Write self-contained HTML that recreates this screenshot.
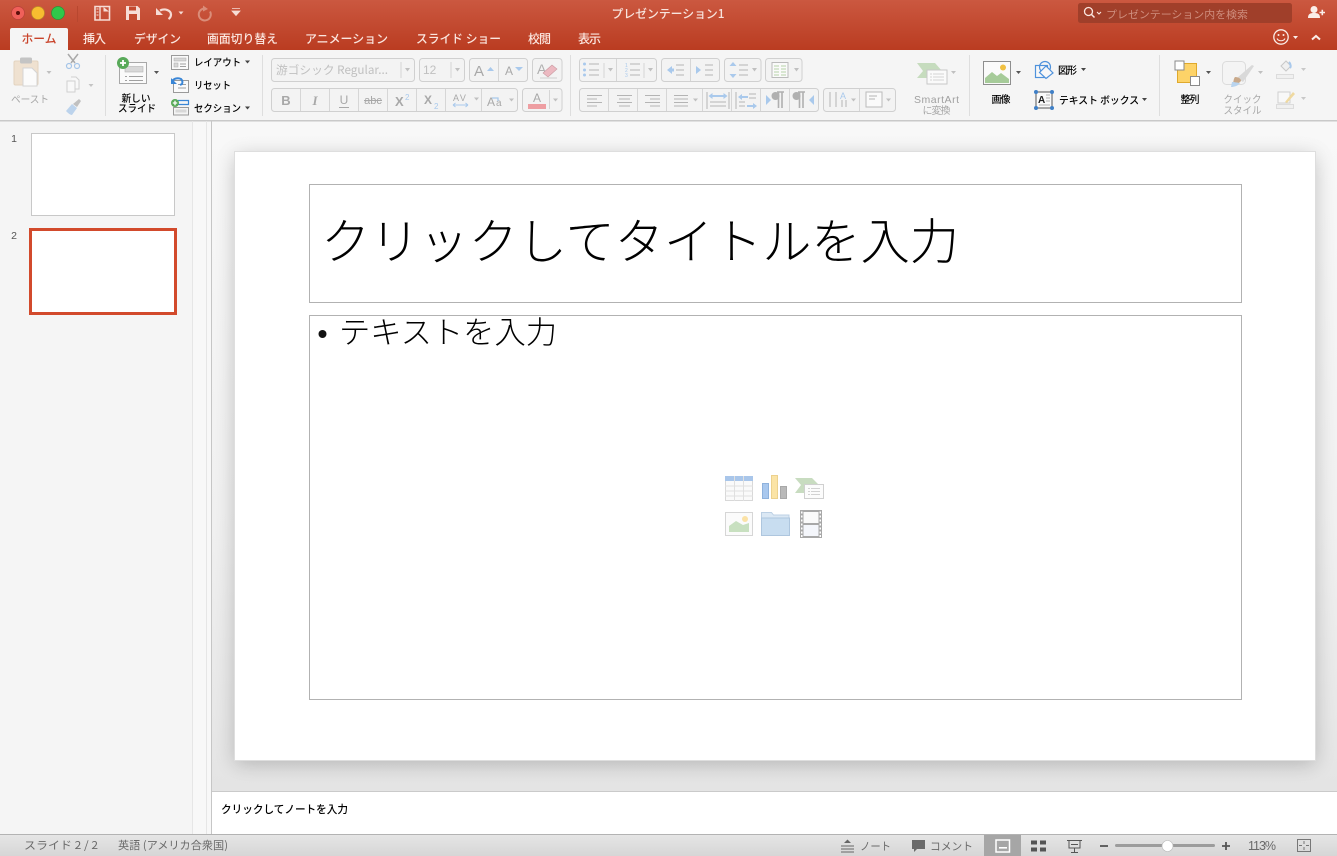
<!DOCTYPE html>
<html lang="ja"><head><meta charset="utf-8"><title>プレゼンテーション1</title>
<style>
html,body{margin:0;padding:0;width:1337px;height:856px;overflow:hidden;background:#fff}
svg{position:absolute;left:0;top:0;display:block}
text{font-family:"Liberation Sans","Noto Sans CJK JP",sans-serif}
.jp{font-family:"Noto Sans CJK JP",sans-serif}
.k{fill:#000;font-size:10px;font-weight:500}
.g{fill:#a8a8a8;font-size:10px}
.t{fill:#fbe6df;font-size:12px;font-weight:500}
.s{fill:#6a6a6a;font-size:11px}
.box{fill:#f3f3f3;stroke:#d0d0d0}
.dv{stroke:#d6d6d6}
.ln{stroke:#b4b4b4;stroke-width:1;fill:none}
.sep{stroke:#dedede}
</style></head><body>
<svg width="1337" height="856" viewBox="0 0 1337 856" xmlns="http://www.w3.org/2000/svg">
<defs>
<linearGradient id="hd" x1="0" y1="0" x2="0" y2="1"><stop offset="0" stop-color="#cb5840"/><stop offset="1" stop-color="#ba3c21"/></linearGradient>
<linearGradient id="cv" x1="0" y1="0" x2="0" y2="1"><stop offset="0" stop-color="#f8f8f8"/><stop offset=".6" stop-color="#f0f0f0"/><stop offset="1" stop-color="#e4e4e4"/></linearGradient>
<linearGradient id="st" x1="0" y1="0" x2="0" y2="1"><stop offset="0" stop-color="#e6e6e6"/><stop offset="1" stop-color="#d6d6d6"/></linearGradient>
<filter id="sh" x="-10%" y="-10%" width="120%" height="120%"><feGaussianBlur stdDeviation="10"/></filter>
</defs>

<!-- header -->
<rect width="1337" height="50" fill="url(#hd)"/>
<circle cx="18" cy="13" r="6.500" fill="#f0605a" stroke="#b8403a" stroke-width=".7"/><circle cx="18" cy="13" r="2" fill="#5c0f0c"/>
<circle cx="38" cy="13" r="6.500" fill="#f7bd30" stroke="#bd8a2a" stroke-width=".7"/>
<circle cx="58" cy="13" r="6.500" fill="#2fc84a" stroke="#2a9438" stroke-width=".7"/>
<line x1="77.500" y1="6" x2="77.500" y2="22" stroke="#b8472f"/>
<!-- qat -->
<path d="M95 6.500h14.500v13.500h-14.500z" fill="none" stroke="#f6dcd5" stroke-width="1.600"/>
<path d="M100 6.500v13.500" stroke="#f6dcd5" stroke-width="1.400"/>
<path d="M103.500 7v4.500h5.500z" fill="#f6dcd5"/>
<path d="M96.500 9h2M96.500 12h2M96.500 15h2" stroke="#f6dcd5"/>
<path d="M126 6h11.500l2.500 2.500v11.500h-14z" fill="#f6dcd5"/>
<rect x="129" y="6.500" width="7" height="4" fill="#c4492f"/><rect x="129" y="14" width="8" height="6" fill="#c4492f"/>
<path d="M156 8l7 7h-7z" fill="#f6dcd5"/>
<path d="M160 10.500c5-2.500 11 0 11 4 0 2-1 3.500-2.500 4.500" fill="none" stroke="#f6dcd5" stroke-width="2.200"/>
<path d="M178.500 11.500h5l-2.500 3z" fill="#f6dcd5"/>
<path d="M204 8.500a6 6 0 1 0 6 3" fill="none" stroke="#da8d79" stroke-width="2"/><path d="M203 5.500l5 3.500-5 2.500z" fill="#da8d79"/>
<path d="M232 8.500h8M232 11h8l-4 4.500z" fill="#f6dcd5" stroke="#f6dcd5" stroke-width=".8"/>
<text x="668" y="18" text-anchor="middle" class="jp" fill="#f8e4de" font-size="12" font-weight="500" textLength="113" lengthAdjust="spacingAndGlyphs">プレゼンテーション1</text>
<!-- search -->
<rect x="1078" y="3" width="214" height="20" rx="2.500" fill="#a03f2a"/>
<circle cx="1088.500" cy="11.500" r="4" fill="none" stroke="#fbe6df" stroke-width="1.300"/><path d="M1091.500 14.500l3 3" stroke="#fbe6df" stroke-width="1.500"/>
<path d="M1097 12l2 2 2-2" fill="none" stroke="#fbe6df" stroke-width="1.100"/>
<text x="1106" y="18" class="jp" fill="#cf8e7e" font-size="10.500" textLength="142" lengthAdjust="spacingAndGlyphs">プレゼンテーション内を検索</text>
<circle cx="1314" cy="9.500" r="3.500" fill="#fbeee9"/><path d="M1308 18c0-4 2-5 6-5s6 1 6 5z" fill="#fbeee9"/><path d="M1319.500 12.500h5.500M1322.300 9.700v5.600" stroke="#fbeee9" stroke-width="1.600"/>
<!-- tabs -->
<path d="M10 50V30q0-2 2-2h54q2 0 2 2v20z" fill="#f5f5f5"/>
<text x="39" y="43" text-anchor="middle" class="jp" fill="#c9432a" font-size="12" font-weight="500" textLength="35" lengthAdjust="spacingAndGlyphs">ホーム</text>
<g class="jp">
<text x="83" y="43" class="t jp" textLength="23">挿入</text>
<text x="134" y="43" class="t jp" textLength="47" lengthAdjust="spacingAndGlyphs">デザイン</text>
<text x="207" y="43" class="t jp" textLength="71" lengthAdjust="spacingAndGlyphs">画面切り替え</text>
<text x="305" y="43" class="t jp" textLength="83" lengthAdjust="spacingAndGlyphs">アニメーション</text>
<text x="416" y="43" class="t jp" textLength="85" lengthAdjust="spacingAndGlyphs">スライド ショー</text>
<text x="528" y="43" class="t jp" textLength="23">校閲</text>
<text x="578" y="43" class="t jp" textLength="23">表示</text>
</g>
<circle cx="1281" cy="37" r="7.200" fill="none" stroke="#fbeee9" stroke-width="1.300"/><circle cx="1278.500" cy="35" r="1" fill="#fbeee9"/><circle cx="1283.500" cy="35" r="1" fill="#fbeee9"/><path d="M1277 38.500c1.500 3 6.500 3 8 0" fill="none" stroke="#fbeee9" stroke-width="1.100"/>
<path d="M1293 36h5l-2.500 3z" fill="#fbeee9"/>
<path d="M1312 39.500l4-3.500 4 3.500" fill="none" stroke="#fbeee9" stroke-width="2"/>

<!-- ribbon -->
<rect y="50" width="1337" height="70" fill="#f5f5f5"/>
<rect y="120" width="1337" height="1.500" fill="#c9c9c9"/>
<g class="sep"><line x1="105.500" y1="55" x2="105.500" y2="116"/><line x1="262.500" y1="55" x2="262.500" y2="116"/><line x1="570.500" y1="55" x2="570.500" y2="116"/><line x1="969.500" y1="55" x2="969.500" y2="116"/><line x1="1159.500" y1="55" x2="1159.500" y2="116"/></g>

<!-- paste -->
<rect x="14" y="61" width="24" height="24" rx="1.500" fill="#efe1d0" stroke="#e3d3bf"/>
<rect x="20" y="57.500" width="12" height="6" rx="1.500" fill="#c4c4c4"/>
<path d="M23 68h9l5 5v13h-14z" fill="#fbfbfb" stroke="#d4d4d4"/>
<path d="M46.500 71h5l-2.500 3z" fill="#c0c0c0"/>
<text x="30" y="103" text-anchor="middle" class="g jp" textLength="38" lengthAdjust="spacingAndGlyphs">ペースト</text>
<path d="M68 54l7 9M78 54l-7 9" stroke="#a9a9a9" stroke-width="1.500"/><circle cx="69" cy="66" r="2.500" fill="none" stroke="#a6c5e8" stroke-width="1.200"/><circle cx="77" cy="66" r="2.500" fill="none" stroke="#a6c5e8" stroke-width="1.200"/>
<path d="M67 81h8v11h-8zM71 77h5l3 3v9h-4" fill="#f8f8f8" stroke="#d0d0d0"/>
<path d="M88.500 84h5l-2.500 3z" fill="#c4c4c4"/>
<path d="M66 111l6-7 5 4-5 7c-2 0-4-2-6-4z" fill="#bcd3ec"/><path d="M73 104l6-5 2 2-4 6z" fill="#c0c0c0"/>

<!-- new slide -->
<rect x="119.500" y="62.500" width="27" height="21" fill="#fafafa" stroke="#a8a8a8"/>
<rect x="125" y="66.500" width="18" height="5.500" fill="#d8d8d8" stroke="#b4b4b4" stroke-width=".6"/>
<path d="M125 76.500h2M129 76.500h14M125 80.500h2M129 80.500h14" stroke="#a0a0a0"/>
<circle cx="123" cy="63" r="6" fill="#58a959"/><path d="M120 63h6M123 60v6" stroke="#fff" stroke-width="1.800"/>
<path d="M154 71h5l-2.500 3z" fill="#555"/>
<text x="136" y="102" text-anchor="middle" class="k jp" textLength="29" lengthAdjust="spacingAndGlyphs">新しい</text>
<text x="137" y="112" text-anchor="middle" class="k jp" textLength="38" lengthAdjust="spacingAndGlyphs">スライド</text>
<!-- layout/reset/section -->
<rect x="171.500" y="55.500" width="17" height="14" fill="#fafafa" stroke="#9a9a9a"/><rect x="174" y="58" width="12" height="3" fill="#d8d8d8" stroke="#aaa" stroke-width=".5"/><rect x="174" y="63" width="4" height="4" fill="#d8d8d8" stroke="#aaa" stroke-width=".5"/><path d="M180 64h6M180 66.500h6" stroke="#a0a0a0"/>
<text x="194" y="66" class="k jp" textLength="47" lengthAdjust="spacingAndGlyphs">レイアウト</text><path d="M245 60.500h5l-2.500 3z" fill="#444"/>
<rect x="173.500" y="80.500" width="15" height="12" fill="#fafafa" stroke="#9a9a9a"/><path d="M178 84.500h8M178 88h8" stroke="#a0a0a0"/>
<path d="M172 82a6 5 0 0 1 9-3 6 5 0 0 1 1 5l-2 1" fill="none" stroke="#3a86d6" stroke-width="2"/><path d="M171 78v6h6z" fill="#3a86d6"/>
<text x="194" y="89" class="k jp" textLength="37" lengthAdjust="spacingAndGlyphs">リセット</text>
<path d="M178 100.500h10.500v4h-10" fill="none" stroke="#3a86d6" stroke-width="1.200"/><rect x="173.500" y="107.500" width="15" height="7.500" fill="#f4f4f4" stroke="#9a9a9a"/><rect x="175.500" y="109.500" width="11" height="3" fill="#d8d8d8"/>
<circle cx="175" cy="103" r="4" fill="#58a959"/><path d="M172.800 103h4.400M175 100.800v4.400" stroke="#fff" stroke-width="1.300"/>
<text x="194" y="112" class="k jp" textLength="47" lengthAdjust="spacingAndGlyphs">セクション</text><path d="M245 106.500h5l-2.500 3z" fill="#444"/>

<!-- font group -->
<rect x="271.500" y="58.500" width="143" height="23" rx="3" class="box"/><line x1="401" y1="62" x2="401" y2="78" class="dv"/>
<text x="276" y="74" class="jp" fill="#c0c0c0" font-size="11.500" textLength="112" lengthAdjust="spacingAndGlyphs">游ゴシック Regular...</text><path d="M405 68h5l-2.500 3.500z" fill="#c0c0c0"/>
<rect x="419.500" y="58.500" width="45" height="23" rx="3" class="box"/><line x1="451" y1="62" x2="451" y2="78" class="dv"/>
<text x="423" y="74" fill="#c0c0c0" font-size="12">12</text><path d="M455 68h5l-2.500 3.500z" fill="#c0c0c0"/>
<rect x="469.500" y="58.500" width="58" height="23" rx="3" class="box"/><line x1="498.500" y1="59" x2="498.500" y2="81" class="dv"/>
<text x="474" y="76" fill="#a8a8a8" font-size="15">A</text><path d="M487 71l3.500-4 3.500 4z" fill="#a9c9ec"/>
<text x="505" y="75" fill="#a8a8a8" font-size="12">A</text><path d="M515 67h8l-4 4z" fill="#a9c9ec"/>
<rect x="532.500" y="58.500" width="29.500" height="23" rx="3" class="box"/>
<text x="537" y="74" fill="#b0b0b0" font-size="14">A</text><path d="M543 73l9-8 5 4-9 8z" fill="#ecb9c1" stroke="#c99aa2" stroke-width=".6"/><path d="M540 78h17" stroke="#cfcfcf"/>
<rect x="271.500" y="88.500" width="246" height="23" rx="3" class="box"/>
<g class="dv"><line x1="300.500" y1="89" x2="300.500" y2="111"/><line x1="329.500" y1="89" x2="329.500" y2="111"/><line x1="358.500" y1="89" x2="358.500" y2="111"/><line x1="387.500" y1="89" x2="387.500" y2="111"/><line x1="416.500" y1="89" x2="416.500" y2="111"/><line x1="445.500" y1="89" x2="445.500" y2="111"/><line x1="481.500" y1="89" x2="481.500" y2="111"/></g>
<text x="286" y="105" text-anchor="middle" fill="#a8a8a8" font-size="13" font-weight="700">B</text>
<text x="315" y="105" text-anchor="middle" fill="#a8a8a8" font-size="13" font-style="italic" font-weight="700" style="font-family:'Liberation Serif',serif">I</text>
<text x="344" y="104" text-anchor="middle" fill="#a8a8a8" font-size="12">U</text><path d="M339 107.500h10" stroke="#a8a8a8"/>
<text x="373" y="104" text-anchor="middle" fill="#a8a8a8" font-size="11">abc</text><path d="M364 100.500h18" stroke="#a8a8a8"/>
<text x="395" y="106" fill="#a8a8a8" font-size="13" font-weight="700">X</text><text x="405" y="100" fill="#a9c9ec" font-size="8">2</text>
<text x="424" y="104" fill="#a8a8a8" font-size="12" font-weight="700">X</text><text x="434" y="109" fill="#a9c9ec" font-size="8">2</text>
<text x="453" y="101" fill="#a8a8a8" font-size="9" letter-spacing="1.500">AV</text><path d="M453 105h15M453 105l2.500-2M453 105l2.500 2M468 105l-2.500-2M468 105l-2.500 2" stroke="#a9c9ec" fill="none"/>
<path d="M474 97.500h5l-2.500 3z" fill="#c0c0c0"/>
<text x="487" y="106" fill="#a8a8a8" font-size="12">A</text><text x="496" y="106" fill="#a8a8a8" font-size="10">a</text><path d="M492 98h6v3" fill="none" stroke="#a9c9ec" stroke-width="1.300"/>
<path d="M509 98.500h5l-2.500 3z" fill="#c0c0c0"/>
<rect x="522.500" y="88.500" width="39.500" height="23" rx="3" class="box"/><line x1="549.500" y1="90" x2="549.500" y2="109" class="dv"/>
<text x="537" y="102" text-anchor="middle" fill="#a8a8a8" font-size="12">A</text><rect x="528" y="104" width="18" height="5" fill="#ee9ea2"/>
<path d="M553 98.500h5l-2.500 3z" fill="#c0c0c0"/>

<!-- paragraph -->
<rect x="579.500" y="58.500" width="77" height="23" rx="3" class="box"/><line x1="616.500" y1="59" x2="616.500" y2="81" class="dv"/><line x1="604" y1="63" x2="604" y2="78" class="dv"/><line x1="644" y1="63" x2="644" y2="78" class="dv"/>
<circle cx="584.500" cy="64" r="1.500" fill="#a9c9ec"/><circle cx="584.500" cy="70" r="1.500" fill="#a9c9ec"/><circle cx="584.500" cy="75" r="1.500" fill="#a9c9ec"/><path d="M589 64h10M589 70h10M589 75h10" class="ln"/>
<path d="M608 68h5l-2.500 3.500zM648 68h5l-2.500 3.500z" fill="#c0c0c0"/>
<text x="625" y="67" fill="#a9c9ec" font-size="5">1</text><text x="625" y="72" fill="#a9c9ec" font-size="5">2</text><text x="625" y="77" fill="#a9c9ec" font-size="5">3</text><path d="M630 64h10M630 70h10M630 75h10" class="ln"/>
<rect x="661.500" y="58.500" width="58" height="23" rx="3" class="box"/><line x1="690.500" y1="59" x2="690.500" y2="81" class="dv"/>
<path d="M667 70l5-4v8z" fill="#a9c9ec"/><rect x="671" y="68.500" width="3" height="3" fill="#a9c9ec"/><path d="M676 65h8M676 70h8M676 75h8" class="ln"/>
<path d="M701 70l-5-4v8z" fill="#a9c9ec"/><rect x="696" y="68.500" width="3" height="3" fill="#a9c9ec"/><path d="M705 65h8M705 70h8M705 75h8" class="ln"/>
<rect x="724.500" y="58.500" width="36.500" height="23" rx="3" class="box"/>
<path d="M733 62l3.500 4h-7zM733 78l3.500-4h-7z" fill="#a9c9ec"/><path d="M739 65h9M739 70h9M739 75h9" class="ln"/><path d="M752 68h5l-2.500 3.500z" fill="#c0c0c0"/>
<rect x="765.500" y="58.500" width="36.500" height="23" rx="3" class="box"/>
<rect x="772" y="62.500" width="16" height="15" fill="#fafafa" stroke="#bbb"/><path d="M774 66h5M781 66h5M774 69h5M781 69h5M774 72h5M781 72h5M774 75h5M781 75h5" stroke="#b5d3a8"/><path d="M794 68h5l-2.500 3.500z" fill="#c0c0c0"/>
<rect x="579.500" y="88.500" width="239" height="23" rx="3" class="box"/>
<g class="dv"><line x1="608.500" y1="89" x2="608.500" y2="111"/><line x1="637.500" y1="89" x2="637.500" y2="111"/><line x1="666.500" y1="89" x2="666.500" y2="111"/><line x1="702.500" y1="89" x2="702.500" y2="111"/><line x1="731.500" y1="89" x2="731.500" y2="111"/><line x1="760.500" y1="89" x2="760.500" y2="111"/><line x1="789.500" y1="89" x2="789.500" y2="111"/></g>
<g class="ln"><path d="M587 95.500h15M587 99h10M587 102.500h15M587 106h10"/><path d="M617 95.500h15M619 99h11M617 102.500h15M619 106h11"/><path d="M645 95.500h15M650 99h10M645 102.500h15M650 106h10"/><path d="M674 95.500h14M674 99h14M674 102.500h14M674 106h14"/></g>
<path d="M693 98.500h5l-2.500 3z" fill="#c0c0c0"/>
<path d="M707 92v17M729 92v17" class="ln"/><path d="M711 96h14" stroke="#a9c9ec" stroke-width="2"/><path d="M708.500 96l4-3v6zM727.500 96l-4-3v6z" fill="#a9c9ec"/><path d="M710 102h16M710 106h16" class="ln"/>
<path d="M736 92v17" class="ln"/><path d="M740 97h8" stroke="#a9c9ec" stroke-width="2"/><path d="M738 97l4-3v6z" fill="#a9c9ec"/><path d="M749 94h7M749 98h7M739 102h6M739 106h6" class="ln"/><path d="M747 106h6" stroke="#a9c9ec" stroke-width="2"/><path d="M757 106l-4-3v6z" fill="#a9c9ec"/>
<path d="M766 95l5 5-5 5z" fill="#a9c9ec"/><path d="M777 92h7M778.500 92v16M782 92v16" stroke="#b0b0b0" stroke-width="1.600" fill="none"/><circle cx="775.500" cy="96" r="4" fill="#b0b0b0"/>
<path d="M814 95l-5 5 5 5z" fill="#a9c9ec"/><path d="M798 92h7M799.500 92v16M803 92v16" stroke="#b0b0b0" stroke-width="1.600" fill="none"/><circle cx="796.500" cy="96" r="4" fill="#b0b0b0"/>
<rect x="823.500" y="88.500" width="72" height="23" rx="3" class="box"/><line x1="859.500" y1="89" x2="859.500" y2="111" class="dv"/>
<path d="M830 92v15M836 92v15M842 100v7M846 100v7" class="ln"/><text x="840" y="99" fill="#a9c9ec" font-size="9">A</text><path d="M851 98.500h5l-2.500 3z" fill="#c0c0c0"/>
<rect x="866" y="92" width="16" height="15" fill="#fafafa" stroke="#bbb"/><path d="M869 96h8M869 99h6" class="ln"/><path d="M886 98.500h5l-2.500 3z" fill="#c0c0c0"/>

<!-- smartart -->
<path d="M917 63h18l7 8-7 7h-18l6-7z" fill="#c6dcbe"/><rect x="927" y="70" width="20" height="14" fill="#fafafa" stroke="#c8c8c8"/><path d="M930 74h2M933 74h11M930 77h2M933 77h11M930 80h2M933 80h11" stroke="#c8c8c8" stroke-width=".8"/>
<path d="M951 71h5l-2.500 3z" fill="#c0c0c0"/>
<text x="936.500" y="103" text-anchor="middle" fill="#a0a0a0" font-size="10.500" textLength="45">SmartArt</text>
<text x="936.500" y="114" text-anchor="middle" class="g jp" textLength="28">に変換</text>

<!-- picture -->
<rect x="983.500" y="61.500" width="27" height="23" fill="#fafafa" stroke="#8e8e8e"/>
<path d="M985 83v-5l7-6 5 4 4-3 8 6v4z" fill="#a6cb99"/><circle cx="1003" cy="67.500" r="3" fill="#f0c042"/>
<path d="M1016 71h5l-2.500 3z" fill="#555"/>
<text x="1001" y="103" text-anchor="middle" class="k jp" textLength="19">画像</text>
<!-- shapes -->
<rect x="1035.500" y="65.500" width="12" height="12" fill="#f8f8f8" stroke="#4f92dc" stroke-width="1.200"/><circle cx="1045" cy="67" r="5.500" fill="none" stroke="#4f92dc" stroke-width="1.200"/><path d="M1046 66l7 7-7 5.500-6.500-6z" fill="#f8f8f8" stroke="#4f92dc" stroke-width="1.200"/>
<text x="1058" y="74" class="k jp" textLength="19">図形</text><path d="M1081 68h5l-2.500 3z" fill="#444"/>
<!-- textbox -->
<rect x="1036" y="92" width="16" height="16" fill="#fafafa" stroke="#555"/>
<text x="1038" y="103" fill="#222" font-size="10" font-weight="700">A</text><path d="M1046 95h4M1046 98h4M1046 101h4M1039 105h11" stroke="#999" stroke-width=".8"/>
<g fill="#3f7fc6"><circle cx="1036" cy="92" r="2"/><circle cx="1052" cy="92" r="2"/><circle cx="1036" cy="108" r="2"/><circle cx="1052" cy="108" r="2"/></g>
<text x="1059" y="104" class="k jp" textLength="80" lengthAdjust="spacingAndGlyphs">テキスト ボックス</text><path d="M1142 98h5l-2.500 3z" fill="#444"/>
<!-- arrange -->
<rect x="1177.500" y="63.500" width="19" height="19" fill="#fdd368" stroke="#dfa92c"/>
<rect x="1175" y="61" width="9" height="9" fill="#fff" stroke="#8a8a8a"/><rect x="1190.500" y="76.500" width="9" height="9" fill="#fff" stroke="#8a8a8a"/>
<path d="M1206 71h5l-2.500 3z" fill="#555"/>
<text x="1190" y="103" text-anchor="middle" class="k jp" textLength="19">整列</text>
<!-- quick style -->
<rect x="1222.500" y="61.500" width="23" height="23" rx="4" fill="#f4f4f4" stroke="#dcdcdc"/>
<path d="M1237 78l15-13 2 1-11 16z" fill="#d9d9d9"/><path d="M1235 77c4 0 6 2 6 4-3 3-7 6-10 6 3-3 2-8 4-10z" fill="#c9a98a"/><path d="M1232 82c3 0 7 1 8 1-2 3-6 4-9 4z" fill="#b9d4ee"/>
<path d="M1258 71h5l-2.500 3z" fill="#c0c0c0"/>
<text x="1242.500" y="103" text-anchor="middle" class="g jp" textLength="38" lengthAdjust="spacingAndGlyphs">クイック</text>
<text x="1242.500" y="114" text-anchor="middle" class="g jp" textLength="38" lengthAdjust="spacingAndGlyphs">スタイル</text>
<path d="M1281 66l5-5 5 5-5 5z" fill="#f0f0f0" stroke="#c8c8c8"/><path d="M1289 62c2 2 2 5 1 6" fill="none" stroke="#a9c9ec" stroke-width="2"/><rect x="1276.500" y="74.500" width="17" height="4" fill="#f0f0f0" stroke="#dcdcdc"/>
<path d="M1301 68h5l-2.500 3z" fill="#c8c8c8"/>
<rect x="1278" y="92" width="12" height="11" fill="#f8f8f8" stroke="#d0d0d0"/><path d="M1285 102l8-10 2 2-8 9z" fill="#efd9a0"/><rect x="1276.500" y="104.500" width="17" height="4" fill="#f0f0f0" stroke="#dcdcdc"/>
<path d="M1301 97h5l-2.500 3z" fill="#c8c8c8"/>

<!-- side panel -->
<rect y="121.500" width="193" height="713" fill="#f5f5f5"/>
<rect x="193" y="121.500" width="19" height="713" fill="#f8f8f8"/>
<line x1="192.500" y1="121" x2="192.500" y2="834" stroke="#e6e6e6"/>
<line x1="206.500" y1="121" x2="206.500" y2="834" stroke="#e6e6e6"/>
<line x1="211.500" y1="121" x2="211.500" y2="834" stroke="#c6c6c6"/>
<text x="14" y="142" text-anchor="middle" fill="#555" font-size="10.500">1</text>
<text x="14" y="239" text-anchor="middle" fill="#555" font-size="10.500">2</text>
<rect x="31.500" y="133.500" width="143" height="82" fill="#fff" stroke="#c8c8c8"/>
<rect x="30.500" y="229.500" width="145" height="84" fill="#fff" stroke="#d24a2c" stroke-width="3"/>

<!-- canvas -->
<rect x="212" y="121.500" width="1125" height="669.500" fill="url(#cv)"/>
<rect x="235" y="152" width="1080" height="608" fill="#000" opacity=".22" filter="url(#sh)" transform="translate(0 4)"/>
<rect x="212" y="791" width="1125" height="1.500" fill="#cacaca"/>
<rect x="212" y="792" width="1125" height="43" fill="#fff"/>
<rect x="234.500" y="151.500" width="1081" height="609" fill="#fff" stroke="#dedede"/>
<rect x="309.500" y="184.500" width="932" height="118" fill="none" stroke="#b2b2b2"/>
<rect x="309.500" y="315.500" width="932" height="384" fill="none" stroke="#b2b2b2"/>
<text x="321" y="259" class="jp" fill="#000" font-size="49" font-weight="300" textLength="638" lengthAdjust="spacingAndGlyphs">クリックしてタイトルを入力</text>
<circle cx="322.500" cy="334" r="4" fill="#111"/>
<text x="339" y="343.500" class="jp" fill="#000" font-size="31" font-weight="300" textLength="218" lengthAdjust="spacingAndGlyphs">テキストを入力</text>

<!-- content icons -->
<rect x="725.500" y="476.500" width="27" height="24" fill="#fafafa" stroke="#d8d8d8"/><rect x="725" y="476" width="28" height="5" fill="#a9c6ea"/>
<path d="M734.500 476v25M743.500 476v25M725 486h28M725 491h28M725 496h28" stroke="#e0e0e0"/>
<rect x="762.500" y="483.500" width="6" height="15" fill="#a9c8ee" stroke="#8fb2dc"/><rect x="771.500" y="475.500" width="6" height="23" fill="#fbe4a6" stroke="#ecd18e"/><rect x="780.500" y="486.500" width="6" height="12" fill="#b9b9b9" stroke="#a8a8a8"/>
<path d="M795 478h17l7 7-7 8h-17l6-8z" fill="#c8dcc0"/><rect x="804.500" y="484.500" width="19" height="14" fill="#fcfcfc" stroke="#d0d0d0"/><path d="M808 488.500h2M811 488.500h9M808 491.500h2M811 491.500h9M808 494.500h2M811 494.500h9" stroke="#c4c4c4" stroke-width=".8"/>
<rect x="725.500" y="512.500" width="27" height="23" fill="#fbfbfb" stroke="#d6d6d6"/><path d="M729 532v-6l7-5 7 4 6-2v9z" fill="#c8e0c0"/><circle cx="745" cy="519" r="3" fill="#fbe2a6"/>
<path d="M761.500 535.500v-23h10l2 2.500h15.500v20.500z" fill="#dbe8f4" stroke="#bcd0e4"/><path d="M761.500 518h28v17.500h-28z" fill="#c8ddf0" stroke="#aec6de"/>
<rect x="800" y="510" width="22" height="28" fill="#a8a8a8"/><rect x="803.500" y="512" width="15" height="11" fill="#fafafa"/><rect x="803.500" y="525" width="15" height="11" fill="#f4f6fb"/>
<path d="M801 512.500h1.500M801 516.500h1.500M801 520.500h1.500M801 524.500h1.500M801 528.500h1.500M801 532.500h1.500M801 536h1.500M819.500 512.500h1.500M819.500 516.500h1.500M819.500 520.500h1.500M819.500 524.500h1.500M819.500 528.500h1.500M819.500 532.500h1.500M819.500 536h1.500" stroke="#fff" stroke-width="2"/>

<text x="221" y="813" class="jp" fill="#000" font-size="11" font-weight="500" textLength="127" lengthAdjust="spacingAndGlyphs">クリックしてノートを入力</text>

<!-- status -->
<rect y="834" width="1337" height="22" fill="url(#st)"/>
<rect y="834" width="1337" height="1" fill="#b3b3b3"/>
<text x="24" y="849" class="s jp" textLength="74" lengthAdjust="spacingAndGlyphs">スライド 2 / 2</text>
<text x="118" y="849" class="s jp" textLength="110" lengthAdjust="spacingAndGlyphs">英語 (アメリカ合衆国)</text>
<path d="M841 846h13M841 849h13M841 852h13" stroke="#666"/><path d="M847.500 839.500l3.500 3.500h-7z" fill="#666"/>
<text x="860" y="850" class="s jp" textLength="31" lengthAdjust="spacingAndGlyphs">ノート</text>
<path d="M912 840h13v9h-8l-3 3v-3h-2z" fill="#6a6a6a"/>
<text x="930" y="850" class="s jp" textLength="43" lengthAdjust="spacingAndGlyphs">コメント</text>
<rect x="984" y="835" width="37" height="21" fill="#a6a6a6"/>
<rect x="996" y="840" width="13.500" height="12" fill="none" stroke="#fff" stroke-width="1.500"/><rect x="999" y="847" width="8" height="1.600" fill="#fff"/>
<path d="M1031 840.500h6v4h-6zM1040 840.500h6v4h-6zM1031 847.500h6v4h-6zM1040 847.500h6v4h-6z" fill="#555"/>
<path d="M1067 840.500h15M1069 841v7h11v-7M1074.500 848v4M1071 852.500h7" stroke="#555" fill="none"/><path d="M1071 844.500h7" stroke="#555"/>
<path d="M1100 846h8" stroke="#555" stroke-width="1.800"/>
<rect x="1115" y="844" width="100" height="3" rx="1.500" fill="#9c9c9c"/>
<circle cx="1167.500" cy="846" r="5.500" fill="#fff" stroke="#bbb" stroke-width=".6"/>
<path d="M1222 846h8M1226 842v8" stroke="#555" stroke-width="1.800"/>
<text x="1248" y="850" fill="#6a6a6a" font-size="12.500" textLength="28">113%</text>
<rect x="1297.500" y="839.500" width="13" height="12" fill="none" stroke="#777"/><path d="M1304 841v3M1304 847v3M1299 845.500h3M1306 845.500h3" stroke="#777"/>
</svg>
</body></html>
